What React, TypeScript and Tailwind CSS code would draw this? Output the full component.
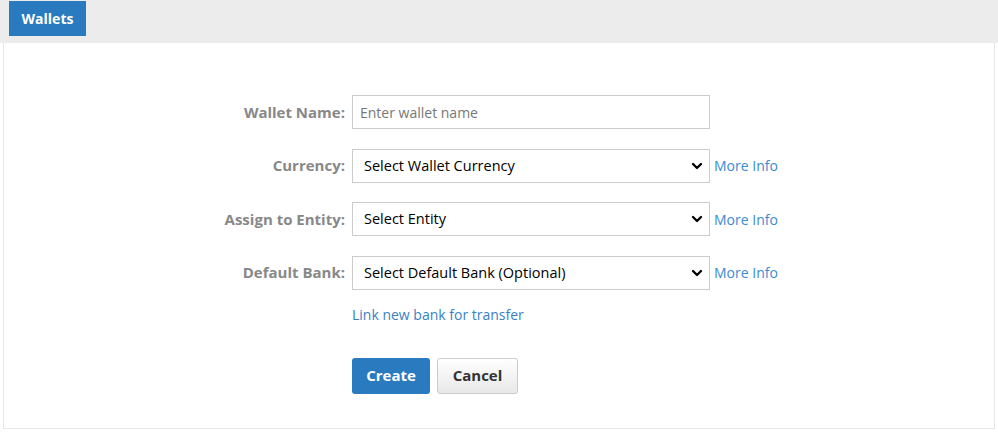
import { ChevronDown } from "lucide-react";

const fieldRows = [
  { label: "Currency:", value: "Select Wallet Currency" },
  { label: "Assign to Entity:", value: "Select Entity" },
  { label: "Default Bank:", value: "Select Default Bank (Optional)" },
];

export default function App() {
  return (
    <div className="w-[998px] h-[447px] bg-white font-['Open_Sans',sans-serif] text-[15px]">
      {/* Header bar */}
      <div className="h-[43px] bg-[#ececec] pl-[9px] pt-px">
        <div className="inline-flex h-[35px] w-[77px] items-center justify-center bg-[#2a7abf] text-[14px] font-bold text-white">
          Wallets
        </div>
      </div>

      {/* Panel */}
      <div className="mx-[3px] h-[386px] border-x border-b border-[#e6e6e6] pt-[52px]">
        <div className="flex flex-col gap-[19.5px]">
          <div className="flex items-center">
            <label className="w-[348px] pr-[7px] text-right font-bold text-[#888]">Wallet Name:</label>
            <input
              placeholder="Enter wallet name"
              className="h-[34px] w-[358px] border border-[#ccc] px-[7px] text-[14px] text-[#555] placeholder:text-[#777] outline-none"
            />
          </div>
          {fieldRows.map((r) => (
            <div key={r.label} className="flex items-center">
              <label className="w-[348px] pr-[7px] text-right font-bold text-[#888]">{r.label}</label>
              <div className="flex h-[34px] w-[358px] items-center justify-between border border-[#ccc] pl-[11px] pr-[4px] text-[14.5px] text-black">
                <span>{r.value}</span>
                <ChevronDown className="h-4 w-4" strokeWidth={3.5} />
              </div>
              <a className="ml-[4px] cursor-pointer text-[14px] text-[#3b8bd0]">More Info</a>
            </div>
          ))}
        </div>
        <div className="mt-[14px] ml-[348px] text-[14px] text-[#3b7fc4]">
          <a className="cursor-pointer">Link new bank for transfer</a>
        </div>
        <div className="mt-[33px] ml-[348px] flex gap-[7px]">
          <button className="h-[36px] w-[78px] rounded-[3px] bg-[#2a7abf] font-bold text-white">Create</button>
          <button className="h-[36px] w-[81px] rounded-[3px] border border-[#ccc] bg-gradient-to-b from-white to-[#e8e8e8] font-bold text-[#333]">
            Cancel
          </button>
        </div>
      </div>
    </div>
  );
}
